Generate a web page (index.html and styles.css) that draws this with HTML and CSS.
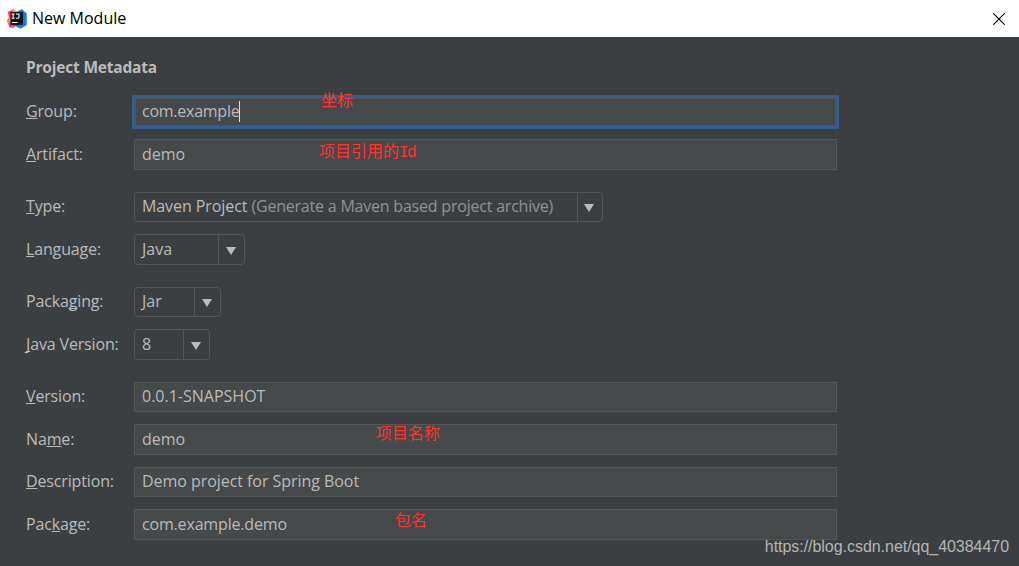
FILE: index.html
```html
<!DOCTYPE html>
<html lang="en">
<head>
<meta charset="utf-8">
<title>New Module</title>
<link rel="stylesheet" href="styles.css">
</head>
<body>
<header class="titlebar">
  <svg class="logo" width="20" height="20" viewBox="0 0 20 20">
    <path fill="#fc3d6c" d="M.5 3 6 .3 10 3v8L3 15 0 12l2-4z"/>
    <path fill="#fc8a2b" d="M0 11 3 8v9l-2.500-3z"/>
    <path fill="#e0408c" d="M1.500 14.500 4 13l5 4-3 2-4-1z"/>
    <path fill="#fca23a" d="M6 .3 11 2.500V5H5z"/>
    <path fill="#087cfa" d="M11 2 15 .3l4.700 4.200v11.500L13.500 19.700 8 17z"/>
    <path fill="#151515" d="M3.500 3h12.500v13H3.500z"/>
    <path fill="none" stroke="#fff" stroke-width="1.100" d="M4.500 5h3.200M6.100 5v4M4.500 9.300h3.200M9 5h3v3q0 1.300-1.300 1.300H9M5 13.500h5.500"/>
  </svg>
  <h1 class="title">New Module</h1>
  <svg class="close" width="12" height="12" viewBox="0 0 12 12"><path d="M.3.3 11.700 11.700M11.700.3.3 11.700" stroke="#000" stroke-width="1.100"/></svg>
</header>
<main class="form">
  <h2 class="heading">Project Metadata</h2>
  <section class="group">
    <div class="row"><label class="label"><u>G</u>roup:</label><div class="field focused"><span class="t-group">com.example</span><i class="caret"></i></div><span class="note n-coord">坐标</span></div>
    <div class="row"><label class="label"><u>A</u>rtifact:</label><div class="field"><span>demo</span></div><span class="note n-id">项目引用的<span class="mono">Id</span></span></div>
  </section>
  <section class="group">
    <div class="row"><label class="label"><u>T</u>ype:</label><div class="combo c-type"><span class="value"><span class="t-maven">Maven Project <span class="dim">(Generate a Maven based project archive)</span></span></span><span class="arrow"></span></div></div>
    <div class="row"><label class="label"><u>L</u>anguage:</label><div class="combo c-language"><span class="value">Java</span><span class="arrow"></span></div></div>
  </section>
  <section class="group">
    <div class="row"><label class="label">Packa<u>g</u>ing:</label><div class="combo c-packaging"><span class="value">Jar</span><span class="arrow"></span></div></div>
    <div class="row"><label class="label"><u>J</u>ava Version:</label><div class="combo c-java"><span class="value">8</span><span class="arrow"></span></div></div>
  </section>
  <section class="group">
    <div class="row"><label class="label"><u>V</u>ersion:</label><div class="field"><span>0.0.1-SNAPSHOT</span></div></div>
    <div class="row"><label class="label">Na<u>m</u>e:</label><div class="field"><span>demo</span></div><span class="note n-name">项目名称</span></div>
    <div class="row"><label class="label"><u>D</u>escription:</label><div class="field"><span class="t-desc">Demo project for Spring Boot</span></div></div>
    <div class="row"><label class="label">Pac<u>k</u>age:</label><div class="field"><span class="t-package">com.example.demo</span></div><span class="note n-package">包名</span></div>
  </section>
</main>
<div class="watermark">https://blog.csdn.net/qq_40384470</div>
</body>
</html>
```
FILE: styles.css
```css
* { box-sizing: border-box; }
body {
  margin: 0;
  width: 1019px;
  height: 566px;
  overflow: hidden;
  position: relative;
  background: #3c3f41;
  color: #bbb;
  font: 16px/20px "Open Sans", "Noto Sans", "Noto Sans CJK SC", sans-serif;
}
.titlebar {
  display: flex;
  align-items: center;
  height: 37px;
  padding: 0 14px 0 7px;
  background: #fff;
  color: #000;
}
.logo { display: block; }
.title { margin: 0 auto 0 5px; padding-bottom: 2px; font-size: 16px; font-weight: 400; }
.close { display: block; }
.form { padding: 20px 0 0 26px; }
.heading { margin: 0 0 20px; font-size: 15.500px; line-height: 20px; font-weight: 700; letter-spacing: -0.2px; }
.group { display: flex; flex-direction: column; gap: 12px; margin-bottom: 22px; }
.row { position: relative; display: flex; align-items: center; height: 30px; }
.row:nth-child(even) { height: 31px; }
.label { width: 108px; padding-bottom: 2px; white-space: nowrap; letter-spacing: -0.15px; }
.label u { text-decoration-thickness: 1px; text-underline-offset: 1px; text-decoration-skip-ink: none; }
.field {
  display: flex;
  align-items: center;
  width: 703px;
  height: 100%;
  padding: 0 0 2px 7px;
  border: 1px solid #555858;
  background: #45494a;
  white-space: nowrap;
}
.focused {
  border-color: #395d8a;
  box-shadow: 0 0 0 2px #395d8a, inset 0 0 0 1px #505456;
}
.t-group { letter-spacing: -0.25px; }
.t-package { letter-spacing: -0.17px; }
.t-desc { letter-spacing: -0.05px; }
.t-maven { letter-spacing: -0.08px; }
.caret { width: 1px; height: 21px; background: #ddd; }
.combo {
  display: flex;
  height: 100%;
  border: 1px solid #555858;
  border-radius: 4px;
}
.value { flex: 1; display: flex; align-items: center; padding: 0 0 2px 7px; white-space: nowrap; }
.dim { color: #929292; letter-spacing: -0.21px; }
.arrow {
  display: flex;
  align-items: center;
  justify-content: center;
  width: 26px;
  padding-right: 2px;
  border-left: 1px solid #555858;
}
.arrow::after { content: ""; margin-top: 2px; border: 5px solid transparent; border-top: 8px solid #bbb; border-bottom: 0; }
.c-type { width: 469px; }
.c-type .arrow { width: 25px; }
.c-language { width: 111px; }
.c-packaging { width: 87px; }
.c-java { width: 76px; }
.note {
  position: absolute;
  color: #ff3232;
  font: 400 16px/20px "Noto Sans CJK SC", sans-serif;
  white-space: nowrap;
}
.mono { font-family: "Liberation Mono", monospace; letter-spacing: -1.6px; }
.n-coord { left: 295px; top: -8px; }
.n-id { left: 293px; top: 1px; }
.n-name { left: 350px; top: -2px; }
.n-package { left: 369px; top: 0; }
.watermark {
  position: absolute;
  right: 10px;
  bottom: 9px;
  color: #b5b6b7;
  font: 16px/20px "Liberation Sans", sans-serif;
  letter-spacing: -0.04px;
}
```
